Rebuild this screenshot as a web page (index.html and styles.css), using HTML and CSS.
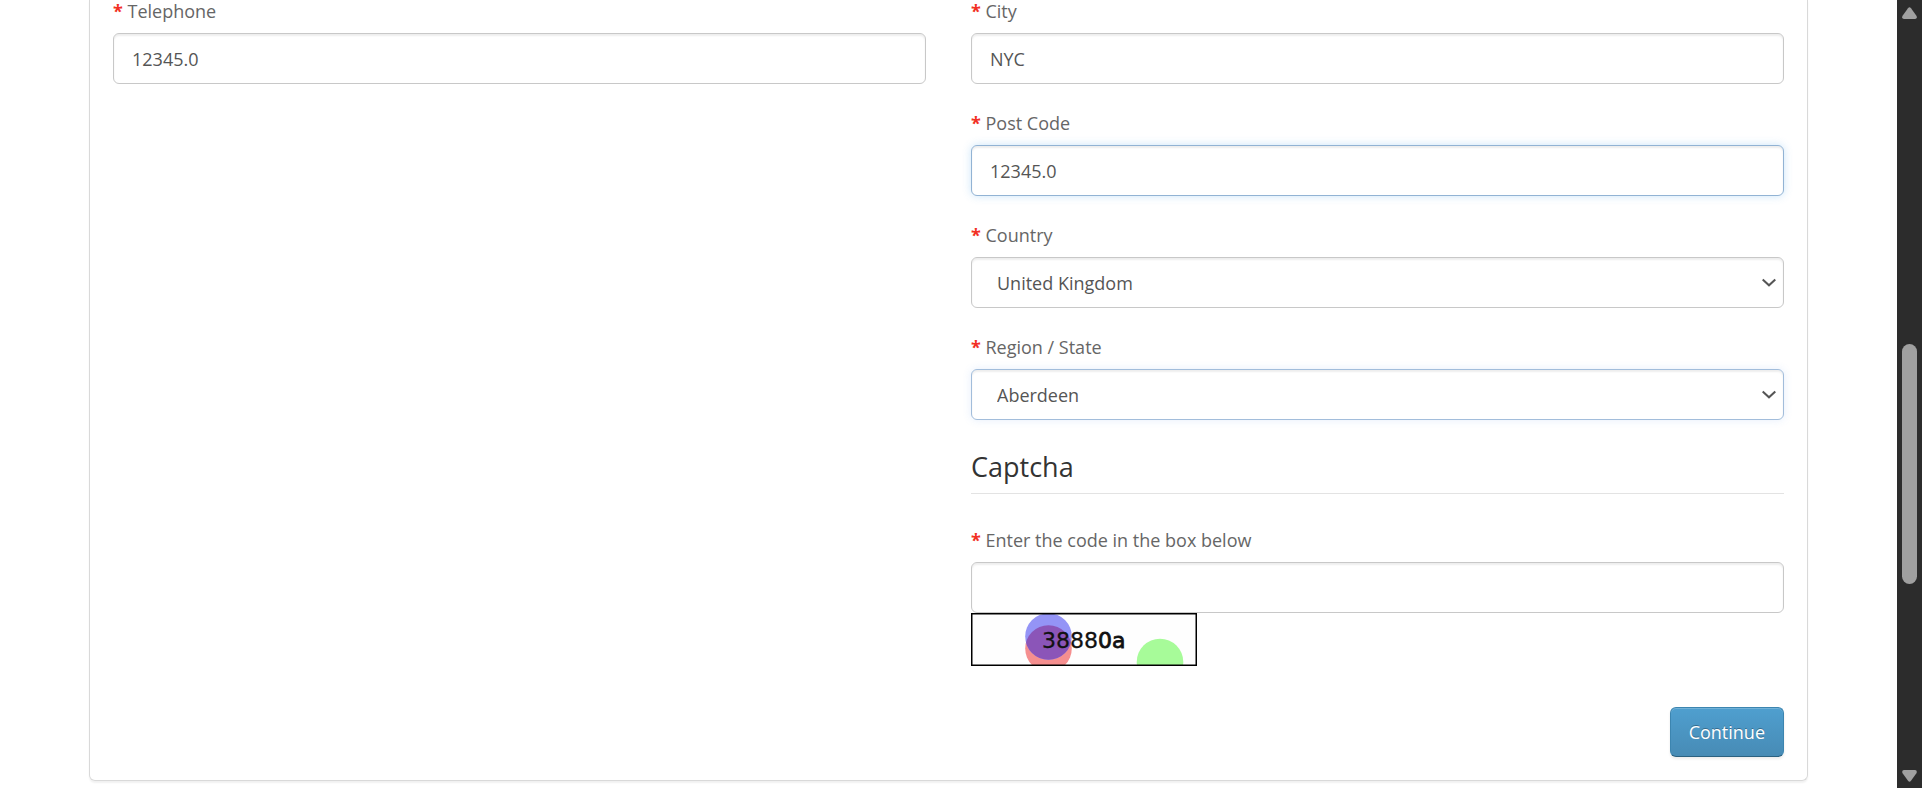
FILE: index.html
```html
<!DOCTYPE html>
<html lang="en">
<head>
<meta charset="utf-8">
<title>Checkout</title>
<link rel="stylesheet" href="styles.css">
</head>
<body>
<div class="window">
  <main class="page">
    <form class="panel">
      <div class="columns">
        <div class="column">
          <div class="field">
            <label class="label" for="telephone">Telephone</label>
            <input class="control" id="telephone" type="text" value="12345.0">
          </div>
        </div>
        <div class="column">
          <div class="field">
            <label class="label" for="city">City</label>
            <input class="control" id="city" type="text" value="NYC">
          </div>
          <div class="field">
            <label class="label" for="postcode">Post Code</label>
            <input class="control control-active" id="postcode" type="text" value="12345.0">
          </div>
          <div class="field">
            <label class="label" for="country">Country</label>
            <div class="select">
              <select class="control" id="country"><option>United Kingdom</option></select>
              <svg class="chevron" viewBox="0 0 14 9" aria-hidden="true"><path d="M.7 1.5 7 7.3 13.3 1.5"/></svg>
            </div>
          </div>
          <div class="field">
            <label class="label" for="region">Region / State</label>
            <div class="select">
              <select class="control control-fading" id="region"><option>Aberdeen</option></select>
              <svg class="chevron" viewBox="0 0 14 9" aria-hidden="true"><path d="M.7 1.5 7 7.3 13.3 1.5"/></svg>
            </div>
          </div>
          <h2 class="legend">Captcha</h2>
          <div class="field">
            <label class="label" for="captcha">Enter the code in the box below</label>
            <input class="control" id="captcha" type="text">
            <svg class="captcha" viewBox="0 0 226 53" role="img" aria-label="Captcha code">
              <clipPath id="overlap"><circle cx="77.5" cy="23.5" r="23.3"/></clipPath>
              <rect width="226" height="53" fill="#fefefe"/>
              <circle cx="77.5" cy="35.5" r="23.3" fill="#f58f8f"/>
              <circle cx="77.5" cy="23.5" r="23.3" fill="#9494f6"/>
              <circle cx="77.5" cy="35.5" r="23.3" fill="#8b55b8" clip-path="url(#overlap)"/>
              <circle cx="189" cy="49" r="23.3" fill="#a7fb99"/>
              <text class="captcha-text" x="71" y="35">3888<tspan class="captcha-heavy">0a</tspan></text>
              <rect x="0.75" y="0.75" width="224.5" height="51.5" fill="none" stroke="#000" stroke-width="1.5"/>
            </svg>
          </div>
        </div>
      </div>
      <div class="actions">
        <button class="button" type="button">Continue</button>
      </div>
    </form>
  </main>
  <div class="scrollbar" aria-hidden="true">
    <svg class="arrow" viewBox="0 0 15 12"><path d="M6 1.2Q7.5-.6 9 1.2L14.6 9Q15.4 12 13 12H2Q-.4 12 .4 9Z"/></svg>
    <div class="track"><div class="thumb"></div></div>
    <svg class="arrow" viewBox="0 0 15 12"><path d="M6 10.8Q7.5 12.6 9 10.8L14.6 3Q15.4 0 13 0H2Q-.4 0 .4 3Z"/></svg>
  </div>
</div>
</body>
</html>
```
FILE: styles.css
```css
* {
  box-sizing: border-box;
}

body {
  margin: 0;
  background: #fff;
  color: #666;
  font-family: "Open Sans", "Noto Sans", sans-serif;
  font-size: 18px;
  line-height: 22px;
}

.window {
  display: grid;
  grid-template-columns: 1fr 25px;
}

.page {
  padding: 0 89px;
}

.panel {
  padding: 0 23px 23px;
  border: 1px solid #d9d9d9;
  border-top: 0;
  border-radius: 0 0 6px 6px;
  box-shadow: 0 2px 2px rgba(0, 0, 0, 0.06);
}

.columns {
  display: grid;
  grid-template-columns: 1fr 1fr;
  gap: 45px;
}

.column {
  display: flex;
  flex-direction: column;
  gap: 28px;
}

.field {
  display: flex;
  flex-direction: column;
}

.label {
  margin-bottom: 11px;
}

.label::before {
  content: "* ";
  color: #f23024;
  font-weight: bold;
}

.control {
  width: 100%;
  height: 51px;
  padding: 0 18px;
  border: 1px solid #c8c8c8;
  border-radius: 6px;
  outline: 0;
  background: #fff;
  box-shadow: inset 0 2px 2px rgba(0, 0, 0, 0.07);
  color: #555;
  font: inherit;
}

.control-active {
  border-color: #92b3d4;
  box-shadow: inset 0 2px 2px rgba(0, 0, 0, 0.07), 0 0 9px rgba(82, 168, 236, 0.3);
}

.control-fading {
  border-color: #a2bddb;
  box-shadow: inset 0 2px 2px rgba(0, 0, 0, 0.07), 0 0 9px rgba(82, 140, 236, 0.15);
}

.select {
  display: grid;
  align-items: center;
}

.select > * {
  grid-area: 1 / 1;
}

.select .control {
  padding: 0 25px;
  appearance: none;
}

.chevron {
  justify-self: end;
  width: 14px;
  height: 9px;
  margin-right: 8px;
  fill: none;
  stroke: #555;
  stroke-width: 2;
  pointer-events: none;
}

.legend {
  margin: 0 0 7px;
  padding-bottom: 7px;
  border-bottom: 1px solid #e3e3e3;
  color: #333;
  font-size: 27px;
  font-weight: normal;
  line-height: 38px;
}

.captcha {
  width: 226px;
  height: 53px;
}

.captcha-text {
  fill: #111;
  stroke: #111;
  stroke-width: 0.3;
  font: 22px "DejaVu Sans", sans-serif;
}

.captcha-heavy {
  stroke-width: 0.8;
}

.actions {
  display: flex;
  justify-content: flex-end;
  padding-top: 41px;
}

.button {
  height: 50px;
  padding: 0 18px;
  border: 1px solid #3c85b0;
  border-bottom-color: #2b6180;
  border-radius: 6px;
  background: linear-gradient(#4f9fcf, #478bb5);
  box-shadow: inset 0 1px 0 rgba(255, 255, 255, 0.2), 0 2px 3px rgba(0, 0, 0, 0.08);
  color: #fff;
  font: inherit;
  text-shadow: 0 -1px 0 rgba(0, 0, 0, 0.3);
}

.scrollbar {
  position: sticky;
  top: 0;
  display: flex;
  flex-direction: column;
  align-items: center;
  height: 100vh;
  padding: 7px 0 6px;
  background: #2c2c2c;
}

.arrow {
  width: 15px;
  height: 12px;
  fill: #a0a0a0;
}

.track {
  flex: 1;
  display: grid;
  grid-template-rows: 325fr 240fr 186fr;
}

.thumb {
  grid-row: 2;
  width: 15px;
  border-radius: 8px;
  background: #a0a0a0;
}
```
